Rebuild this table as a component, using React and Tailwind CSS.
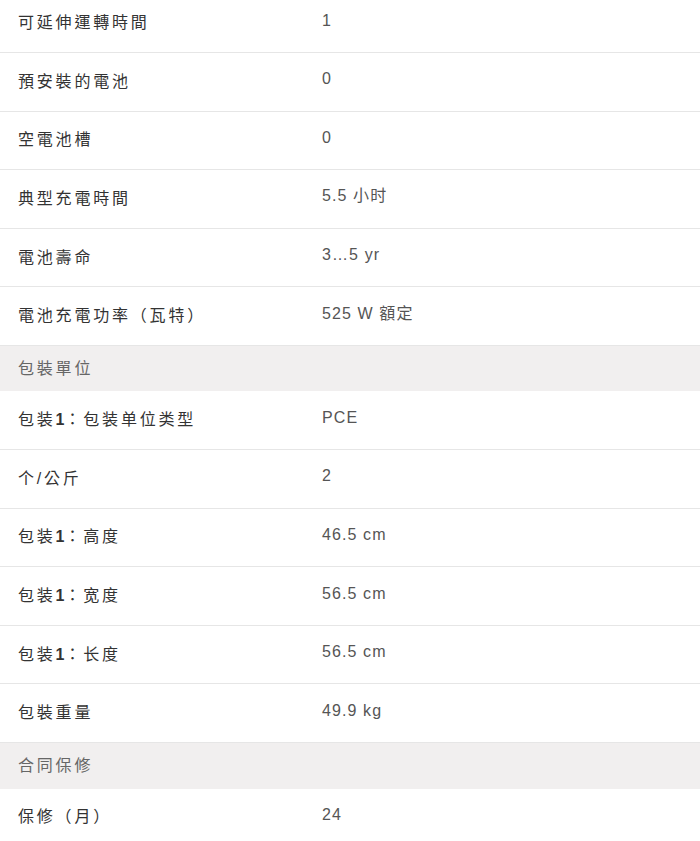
import React from "react";

const sections = [
  {
    title: null,
    rows: [
      ["可延伸運轉時間", "1"],
      ["預安裝的電池", "0"],
      ["空電池槽", "0"],
      ["典型充電時間", "5.5 小时"],
      ["電池壽命", "3…5 yr"],
      ["電池充電功率（瓦特）", "525 W 額定"],
    ],
  },
  {
    title: "包裝單位",
    rows: [
      [["包装", "1", "：包装单位类型"], "PCE"],
      ["个/公斤", "2"],
      [["包装", "1", "：高度"], "46.5 cm"],
      [["包装", "1", "：宽度"], "56.5 cm"],
      [["包装", "1", "：长度"], "56.5 cm"],
      ["包裝重量", "49.9 kg"],
    ],
  },
  {
    title: "合同保修",
    rows: [["保修（月）", "24"]],
  },
];

const Label = ({ value }) => {
  if (Array.isArray(value)) {
    return (
      <span>
        {value[0]}
        <span className="font-bold tracking-normal">{value[1]}</span>
        {value[2]}
      </span>
    );
  }
  return <span>{value}</span>;
};

const SpecRow = ({ label, value }) => (
  <div className="flex items-center h-[58.6px] border-b border-[#e6e6e6]">
    <div className="w-[322px] shrink-0 pl-[18px] text-[16px] tracking-[2.8px] text-[#333]">
      <Label value={label} />
    </div>
    <div className="mb-[5px] text-[16px] tracking-[1.1px] text-[#555]">{value}</div>
  </div>
);

export default function App() {
  return (
    <div
      className="w-[700px] h-[841px] overflow-hidden bg-white"
      style={{ fontFamily: '"Liberation Sans", "Noto Sans CJK TC", sans-serif' }}
    >
      <div className="-mt-[5.6px]">
        {sections.map((section, i) => (
          <div key={i}>
            {section.title && (
              <div className="flex items-center h-[45.5px] bg-[#f1efef] pl-[18px] text-[16px] tracking-[2.8px] text-[#666]">
                {section.title}
              </div>
            )}
            {section.rows.map(([label, value], j) => (
              <SpecRow key={j} label={label} value={value} />
            ))}
          </div>
        ))}
      </div>
    </div>
  );
}
